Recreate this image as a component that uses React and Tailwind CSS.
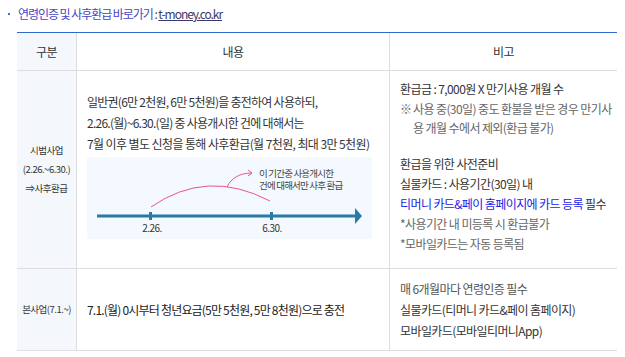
export default function App() {
  const font = { fontFamily: '"Noto Sans CJK KR", "Noto Sans", sans-serif' };
  return (
    <div className="w-[625px] h-[357px] bg-white overflow-hidden text-[#333]" style={font}>
      <div className="flex items-center h-[20px] mt-[4px] pl-[8px] text-[12px] tracking-[-1.05px]">
        <span className="w-[2px] h-[2px] bg-[#3a6fd8] mr-[8px]"></span>
        <span className="text-[#4646c4]">연령인증 및 사후환급 바로가기 :&nbsp;</span>
        <span className="text-[#3a3a6a] underline">t-money.co.kr</span>
      </div>
      <div className="ml-[17px] mt-[8px] w-[600px] border-t border-[#2d6bd0] grid grid-cols-[60px_313px_227px] text-[12px] tracking-[-0.6px]">
        {/* header */}
        <div className="h-[38px] bg-[#f4f8fd] border-r border-b border-[#ddd] flex items-center justify-center">구분</div>
        <div className="h-[38px] border-r border-b border-[#ddd] flex items-center justify-center">내용</div>
        <div className="h-[38px] border-b border-[#ddd] flex items-center justify-center">비고</div>

        {/* row 1 */}
        <div className="h-[198px] bg-[#f4f8fd] border-r border-b border-[#ddd] flex flex-col items-center justify-center text-[9.5px] tracking-[-0.5px] leading-[19px]">
          <div>시범사업</div>
          <div>(2.26.~6.30.)</div>
          <div>⇒사후환급</div>
        </div>
        <div className="h-[198px] border-r border-b border-[#ddd] pl-[10px] pt-[20px] leading-[21px]">
          <div className="tracking-[-0.75px]">일반권(6만 2천원, 6만 5천원)을 충전하여 사용하되,</div>
          <div className="tracking-[-0.75px]">2.26.(월)~6.30.(일) 중 사용개시한 건에 대해서는</div>
          <div className="whitespace-nowrap">7월 이후 별도 신청을 통해 사후환급(월 7천원, 최대 3만 5천원)</div>
          <div className="mt-[3px] w-[285px] h-[82px] bg-[#f3f9fe]">
            <svg width="285" height="82" viewBox="0 0 285 82">
              <path d="M64,50 Q120,11 183,44" fill="none" stroke="#e8588a" strokeWidth="1" />
              <path d="M140,30 C144,21 153,16 165,16" fill="none" stroke="#e8588a" strokeWidth="1" />
              <path d="M161,13 L165,16 L161,19" fill="none" stroke="#e8588a" strokeWidth="1" />
              <rect x="10" y="57.5" width="260" height="3" fill="#2b7aa6" />
              <path d="M268,51 L275,59 L268,67 Z" fill="#2b7aa6" />
              <rect x="62" y="55" width="3" height="8" fill="#2b7aa6" />
              <rect x="183" y="55" width="3" height="8" fill="#2b7aa6" />
              <text x="65" y="75" textAnchor="middle" fontSize="10" fill="#333" letterSpacing="-0.5" style={font}>2.26.</text>
              <text x="185" y="75" textAnchor="middle" fontSize="10" fill="#333" letterSpacing="-0.5" style={font}>6.30.</text>
              <text x="172" y="20" fontSize="9.5" fill="#444" letterSpacing="-0.8" style={font}>이 기간중 사용개시한</text>
              <text x="172" y="32" fontSize="9.5" fill="#444" letterSpacing="-0.8" style={font}>건에 대해서만 사후 환급</text>
            </svg>
          </div>
        </div>
        <div className="h-[198px] border-b border-[#ddd] pl-[10px] pt-[8px] leading-[20px]">
          <div>환급금 : 7,000원 X 만기사용 개월 수</div>
          <div className="flex text-[#666] leading-[19px]">
            <span className="w-[13px] shrink-0">※</span>
            <span>사용 중(30일) 중도 환불을 받은 경우 만기사용 개월 수에서 제외(환급 불가)</span>
          </div>
          <div className="mt-[17px]">환급을 위한 사전준비</div>
          <div>실물카드 : 사용기간(30일) 내</div>
          <div className="whitespace-nowrap"><span className="text-[#1a1ae6]">티머니 카드&amp;페이 홈페이지에 카드 등록</span> 필수</div>
          <div className="text-[#666]">*사용기간 내 미등록 시 환급불가</div>
          <div className="text-[#666]">*모바일카드는 자동 등록됨</div>
        </div>

        {/* row 2 */}
        <div className="h-[82px] bg-[#f4f8fd] border-r border-b border-[#ddd] flex items-center justify-center text-[9.5px] tracking-[-0.5px]">본사업(7.1.~)</div>
        <div className="h-[82px] border-r border-b border-[#ddd] pl-[10px] flex items-center text-[12px] tracking-[-0.8px] text-[#222]">7.1.(월) 0시부터 청년요금(5만 5천원, 5만 8천원)으로 충전</div>
        <div className="h-[82px] border-b border-[#ddd] pl-[10px] flex flex-col justify-center leading-[21px]">
          <div className="text-[#555]">매 6개월마다 연령인증 필수</div>
          <div>실물카드(티머니 카드&amp;페이 홈페이지)</div>
          <div>모바일카드(모바일티머니App)</div>
        </div>
      </div>
    </div>
  );
}
